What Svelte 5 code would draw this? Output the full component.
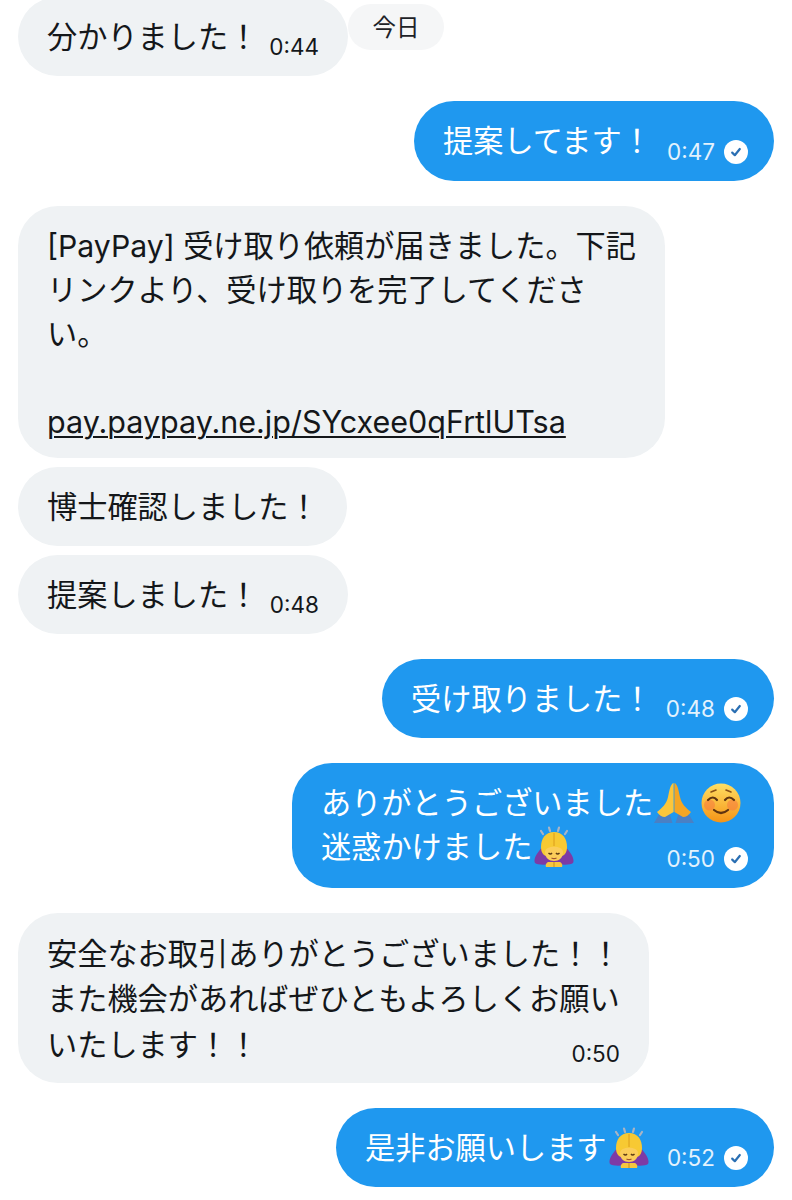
<script>
  // Chat log: side is 'in' or 'out', emoji ids are drawn by the inline snippets below.
  const messages = [
    { side: 'in', cls: 'm1', lines: [['分かりました！']], time: '0:44' },
    { side: 'out', cls: 'm2', lines: [['提案してます！']], time: '0:47' },
    { side: 'in', cls: 'm3', paypay: true },
    { side: 'in', cls: 'm4', lines: [['博士確認しました！']] },
    { side: 'in', cls: 'm5', lines: [['提案しました！']], time: '0:48' },
    { side: 'out', cls: 'm6', lines: [['受け取りました！']], time: '0:48' },
    { side: 'out', cls: 'm7', lines: [['ありがとうございました', 'pray', 'smile'], ['迷惑かけました', 'bow']], time: '0:50' },
    { side: 'in', cls: 'm8', lines: [['安全なお取引ありがとうございました！！'], ['また機会があればぜひともよろしくお願い'], ['いたします！！']], time: '0:50' },
    { side: 'out', cls: 'm9', lines: [['是非お願いします', 'bow']], time: '0:52' }
  ];
</script>

{#snippet pray()}
  <svg class="emoji pray" viewBox="0 0 42 42" aria-hidden="true">
    <path d="M1 41 L8 29 L16 30 L19.5 41 Z" fill="#4a80c4" />
    <path d="M41 41 L34 29 L26 30 L22.5 41 Z" fill="#4a80c4" />
    <path d="M20.6 1 C17.5 2 16.5 8 15 15 C13.5 22 9 26 4 30 C6 33 9 35 12 35 L20.6 30 Z" fill="#fcc63a" />
    <path d="M21.4 1 C24.5 2 25.5 8 27 15 C28.5 22 33 26 38 30 C36 33 33 35 30 35 L21.4 30 Z" fill="#f5a623" />
  </svg>
{/snippet}

{#snippet smile()}
  <svg class="emoji smile" viewBox="0 0 40 40" aria-hidden="true">
    <defs>
      <linearGradient id="face" x1="0" y1="0" x2="0" y2="1">
        <stop offset="0" stop-color="#ffdf63" />
        <stop offset="1" stop-color="#f59416" />
      </linearGradient>
    </defs>
    <circle cx="20" cy="20" r="19.5" fill="url(#face)" />
    <circle cx="8.5" cy="22" r="5.5" fill="#f5793f" opacity=".55" />
    <circle cx="31.5" cy="22" r="5.5" fill="#f5793f" opacity=".55" />
    <path d="M7 17 Q12 12 16 17 M24 17 Q28 12 33 17" fill="none" stroke="#5f3410" stroke-width="2.2" stroke-linecap="round" />
    <path d="M10 9 L15 7 M30 9 L25 7" stroke="#8a5016" stroke-width="1.6" stroke-linecap="round" />
    <path d="M13 27 Q20 33 27 27" fill="none" stroke="#5f3410" stroke-width="2.2" stroke-linecap="round" />
  </svg>
{/snippet}

{#snippet bow()}
  <svg class="emoji bow" viewBox="0 0 40 42" aria-hidden="true">
    <path d="M7 5 L9 8 M15 1.5 L16 5 M25 1.5 L24 5 M33 5 L31 8" stroke="#a9b4c4" stroke-width="2.2" stroke-linecap="round" />
    <path d="M9 20 C3 27 -1 33 1 37 C3 39 11 39 17 38 L23 38 C29 39 37 39 39 37 C41 33 37 27 31 20 Z" fill="#7d3aa5" />
    <path d="M20 6 C11 6 7 13 7 21 C7 26 9 29 12 30 L28 30 C31 29 33 26 33 21 C33 13 29 6 20 6 Z" fill="#f7c933" />
    <path d="M20 7 L20 20" fill="none" stroke="#dc9c1c" stroke-width="1" />
    <path d="M11 26 C11 19 29 19 29 26 C29 32 25 35 20 35 C15 35 11 32 11 26 Z" fill="#fbcd5a" />
    <path d="M14.5 27 Q16.5 29 18 27 M22 27 Q23.5 29 25.5 27" fill="none" stroke="#5d3a14" stroke-width="1.4" />
    <path d="M17.5 32 Q20 33.4 22.5 32" fill="none" stroke="#a0522d" stroke-width="1.2" />
    <path d="M12 41 L28 41 C29 38 27 36 25 36 L15 36 C13 36 11 38 12 41 Z" fill="#f6c63f" />
    <path d="M20 36 L20 41" stroke="#c98f1d" stroke-width="1" />
  </svg>
{/snippet}

{#snippet check()}
  <svg class="check" viewBox="0 0 24 24" aria-hidden="true">
    <circle cx="12" cy="12" r="12" fill="#fff" />
    <path d="M8.2 12.6 L10.8 15.2 L15.8 9" fill="none" stroke="#2a6fb3" stroke-width="2.2" stroke-linecap="round" stroke-linejoin="round" />
  </svg>
{/snippet}

<div class="chat">
  <span class="today">今日</span>

  {#each messages as m}
    <div class="bubble {m.side} {m.cls}">
      {#if m.paypay}
        <p>[PayPay] 受け取り依頼が届きました。下記</p>
        <p>リンクより、受け取りを完了してくださ</p>
        <p>い。</p>
        <p>&nbsp;</p>
        <p><a href="#paypay">pay.paypay.ne.jp/SYcxee0qFrtlUTsa</a></p>
      {:else}
        {#each m.lines as line}
          <p>
            {line[0]}{#each line.slice(1) as e}{#if e === 'pray'}{@render pray()}{:else if e === 'smile'}{@render smile()}{:else}{@render bow()}{/if}{/each}
          </p>
        {/each}
      {/if}
      {#if m.time}
        <span class="time">
          {m.time}
          {#if m.side === 'out'}{@render check()}{/if}
        </span>
      {/if}
    </div>
  {/each}
</div>

<style>
  :global(body) {
    background: #fff;
  }
  .chat {
    position: relative;
    height: 1200px;
    overflow: hidden;
    padding: 0 18px;
    box-sizing: border-box;
    display: flex;
    flex-direction: column;
    font-family: "Inter", "Noto Sans CJK JP", sans-serif;
  }
  .today {
    position: absolute;
    left: 348px;
    top: 4px;
    width: 96px;
    height: 46px;
    border-radius: 23px;
    background: #f5f6f7;
    color: #1d2227;
    font-size: 23.5px;
    line-height: 47px;
    text-align: center;
  }
  .bubble {
    position: relative;
    box-sizing: border-box;
    border-radius: 40px;
    padding: 18px 29px;
    font-size: 30.2px;
    line-height: 44px;
    flex: none;
  }
  .bubble p {
    margin: 0;
    white-space: nowrap;
    display: flex;
    align-items: center;
    height: 44px;
  }
  .in {
    align-self: flex-start;
    background: #eff2f4;
    color: #14171a;
  }
  .out {
    align-self: flex-end;
    background: #1f98ef;
    color: #fff;
  }
  a {
    color: inherit;
    font-size: 30.5px;
    text-decoration: underline;
    text-underline-offset: 3px;
    text-decoration-thickness: 2px;
  }
  .time {
    position: absolute;
    right: 29px;
    bottom: 15px;
    display: flex;
    align-items: center;
    gap: 9px;
    font-size: 22.5px;
    line-height: 28px;
    white-space: nowrap;
  }
  .out .time {
    right: 26px;
    bottom: 15px;
    color: #e3f2fd;
  }
  .check {
    width: 24px;
    height: 24px;
  }
  .emoji {
    flex: none;
  }
  .emoji.pray {
    width: 42px;
    height: 42px;
  }
  .emoji.smile {
    width: 40px;
    height: 40px;
    margin-left: 6px;
  }
  .emoji.bow {
    width: 40px;
    height: 42px;
    margin-left: 2px;
  }
  .m1 { width: 330px; height: 79px; margin-top: -3px; }
  .m2 { width: 360px; height: 80px; margin-top: 25px; }
  .m3 { width: 647px; height: 252px; margin-top: 25px; }
  .m4 { width: 329px; height: 79px; margin-top: 9px; }
  .m5 { width: 330px; height: 79px; margin-top: 9px; }
  .m6 { width: 392px; height: 79px; margin-top: 25px; }
  .m7 { width: 482px; height: 125px; margin-top: 25px; }
  .m8 { width: 631px; height: 170px; margin-top: 25px; }
  .m8 p { height: 45.5px; }
  .m9 { width: 438px; height: 79px; margin-top: 25px; }
</style>
